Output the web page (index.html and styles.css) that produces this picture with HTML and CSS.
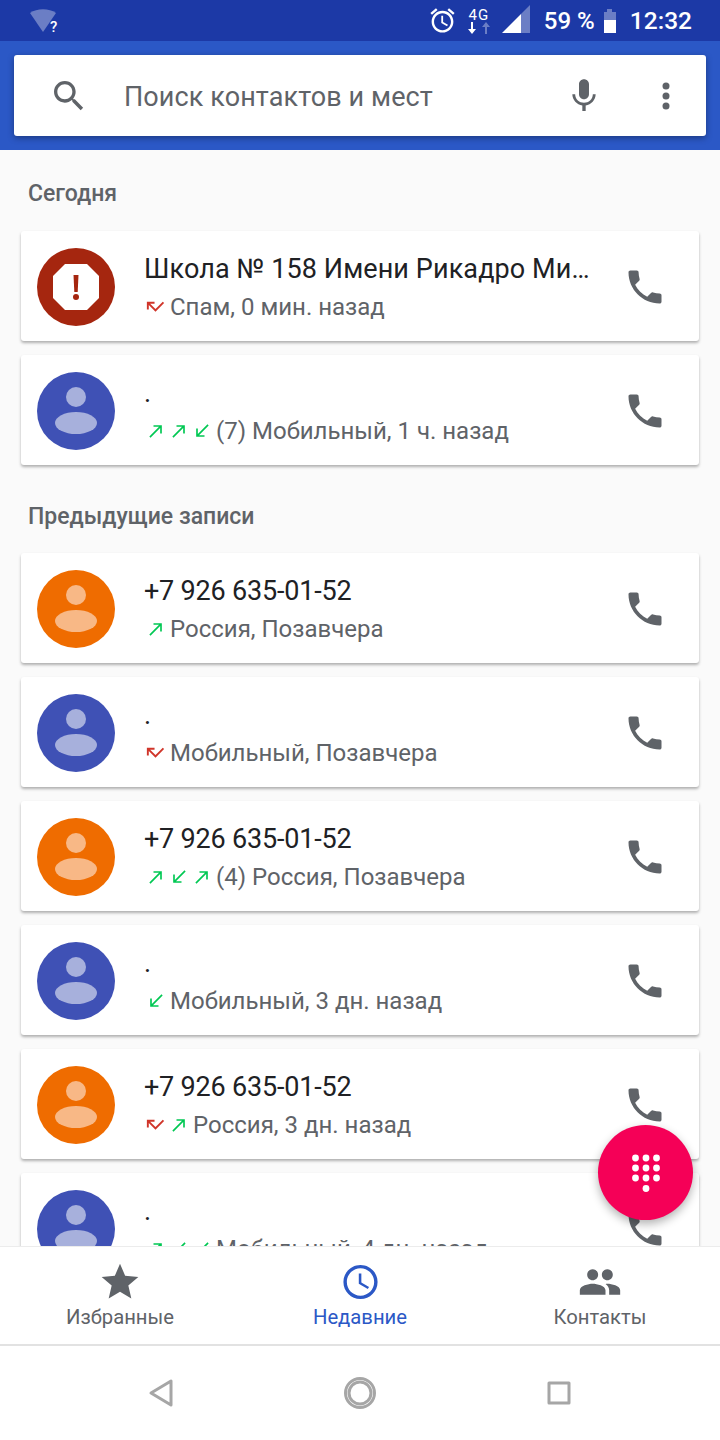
FILE: index.html
```html
<!DOCTYPE html>
<html>
<head>
  <title>Телефон</title>
  <link rel="stylesheet" href="styles.css">
</head>
<body>
  <svg class="defs" width="0" height="0">
    <symbol id="phone" viewBox="0 0 24 24"><path d="M6.62 10.79c1.44 2.83 3.76 5.14 6.59 6.59l2.2-2.2c.27-.27.67-.36 1.02-.24 1.12.37 2.33.57 3.57.57.55 0 1 .45 1 1V20c0 .55-.45 1-1 1-9.39 0-17-7.61-17-17 0-.55.45-1 1-1h3.5c.55 0 1 .45 1 1 0 1.25.2 2.45.57 3.57.11.35.03.74-.25 1.02l-2.2 2.2z"/></symbol>
    <symbol id="made" viewBox="0 0 24 24"><path d="M9 5v2h6.59L4 18.59 5.41 20 17 8.41V15h2V5z"/></symbol>
    <symbol id="received" viewBox="0 0 24 24"><path d="M20 5.41L18.59 4 7 15.59V9H5v10h10v-2H8.41z"/></symbol>
    <symbol id="missed" viewBox="0 0 24 24"><path d="M19.59 7L12 14.59 6.41 9H11V7H3v8h2v-4.59l7 7 9-9z"/></symbol>
    <symbol id="person" viewBox="0 0 78 78"><circle cx="39" cy="25" r="10"/><ellipse cx="39" cy="51" rx="21" ry="11"/></symbol>
  </svg>

  <div class="app">
    <div class="status-bar">
      <svg class="wifi" viewBox="0 0 36 26" width="36" height="26">
        <path class="dim" d="M0 5C7 0 19 0 26 5L13 24z"/>
        <text x="20" y="24">?</text>
      </svg>
      <div class="status-right">
        <svg class="alarm" viewBox="0 0 24 24" width="29" height="29"><path d="M22 5.72l-4.6-3.86-1.29 1.53 4.6 3.86L22 5.72zM7.88 3.39L6.6 1.86 2 5.71l1.29 1.53 4.59-3.85zM12.5 8H11v6l4.75 2.85.75-1.23-4-2.37V8zM12 4c-4.97 0-9 4.03-9 9s4.03 9 9 9 9-4.03 9-9-4.03-9-9-9zm0 16c-3.87 0-7-3.13-7-7s3.13-7 7-7 7 3.13 7 7-3.13 7-7 7z"/></svg>
        <div class="net">
          <span class="net-label">4G</span>
          <svg viewBox="0 0 26 12" width="26" height="12">
            <path d="M5 0h2v7h3l-4 5-4-5h3z"/>
            <path class="dim" d="M19 12h2V5h3l-4-5-4 5h3z"/>
          </svg>
        </div>
        <svg class="signal" viewBox="0 0 28 28" width="28" height="28">
          <path class="dim" d="M28 0v28H19V9z"/>
          <path d="M19 9v19H0z"/>
        </svg>
        <span class="battery-text">59 %</span>
        <div class="battery">
          <div class="battery-cap"></div>
          <div class="battery-empty"></div>
          <div class="battery-full"></div>
        </div>
        <span class="clock">12:32</span>
      </div>
    </div>

    <div class="header">
      <div class="search-box">
        <svg class="search-icon" viewBox="0 0 24 24" width="40" height="40"><path d="M15.5 14h-.79l-.28-.27C15.41 12.59 16 11.11 16 9.5 16 5.91 13.09 3 9.5 3S3 5.91 3 9.5 5.91 16 9.5 16c1.61 0 3.09-.59 4.23-1.57l.27.28v.79l5 4.99L20.49 19l-4.99-5zm-6 0C7.01 14 5 11.99 5 9.5S7.01 5 9.5 5 14 7.01 14 9.5 11.99 14 9.5 14z"/></svg>
        <span class="search-text">Поиск контактов и мест</span>
        <svg class="mic-icon" viewBox="0 0 24 24" width="40" height="40"><path d="M12 14c1.66 0 2.99-1.34 2.99-3L15 5c0-1.66-1.34-3-3-3S9 3.34 9 5v6c0 1.66 1.34 3 3 3zm5.3-3c0 3-2.54 5.1-5.3 5.1S6.7 14 6.7 11H5c0 3.41 2.72 6.23 6 6.72V21h2v-3.28c3.28-.48 6-3.3 6-6.72h-1.7z"/></svg>
        <svg class="more-icon" viewBox="0 0 24 24" width="40" height="40"><circle cx="12" cy="6" r="2.1"/><circle cx="12" cy="12" r="2.1"/><circle cx="12" cy="18" r="2.1"/></svg>
      </div>
    </div>

    <div class="list">
      <div class="section-title">Сегодня</div>

      <div class="card">
        <svg class="avatar spam" viewBox="0 0 78 78" width="78" height="78">
          <circle cx="39" cy="39" r="39"/>
          <path class="octagon" d="M28 16h22l12 12v22L50 62H28L16 50V28z"/>
          <path d="M36.500 27h5l-.8 17h-3.400z"/>
          <circle cx="39" cy="49" r="3"/>
        </svg>
        <div class="info">
          <div class="name">Школа № 158 Имени Рикадро Миллоса</div>
          <div class="sub">
            <svg class="arrow red"><use href="#missed"/></svg>
            <span>Спам, 0 мин. назад</span>
          </div>
        </div>
        <svg class="phone"><use href="#phone"/></svg>
      </div>

      <div class="card">
        <svg class="avatar blue" viewBox="0 0 78 78" width="78" height="78">
          <circle cx="39" cy="39" r="39"/>
          <use class="face" href="#person"/>
        </svg>
        <div class="info">
          <div class="name">.</div>
          <div class="sub">
            <svg class="arrow green"><use href="#made"/></svg>
            <svg class="arrow green"><use href="#made"/></svg>
            <svg class="arrow green"><use href="#received"/></svg>
            <span>(7) Мобильный, 1 ч. назад</span>
          </div>
        </div>
        <svg class="phone"><use href="#phone"/></svg>
      </div>

      <div class="section-title second">Предыдущие записи</div>

      <div class="card">
        <svg class="avatar orange" viewBox="0 0 78 78" width="78" height="78">
          <circle cx="39" cy="39" r="39"/>
          <use class="face" href="#person"/>
        </svg>
        <div class="info">
          <div class="name number">+7 926 635-01-52</div>
          <div class="sub">
            <svg class="arrow green"><use href="#made"/></svg>
            <span>Россия, Позавчера</span>
          </div>
        </div>
        <svg class="phone"><use href="#phone"/></svg>
      </div>

      <div class="card">
        <svg class="avatar blue" viewBox="0 0 78 78" width="78" height="78">
          <circle cx="39" cy="39" r="39"/>
          <use class="face" href="#person"/>
        </svg>
        <div class="info">
          <div class="name">.</div>
          <div class="sub">
            <svg class="arrow red"><use href="#missed"/></svg>
            <span>Мобильный, Позавчера</span>
          </div>
        </div>
        <svg class="phone"><use href="#phone"/></svg>
      </div>

      <div class="card">
        <svg class="avatar orange" viewBox="0 0 78 78" width="78" height="78">
          <circle cx="39" cy="39" r="39"/>
          <use class="face" href="#person"/>
        </svg>
        <div class="info">
          <div class="name number">+7 926 635-01-52</div>
          <div class="sub">
            <svg class="arrow green"><use href="#made"/></svg>
            <svg class="arrow green"><use href="#received"/></svg>
            <svg class="arrow green"><use href="#made"/></svg>
            <span>(4) Россия, Позавчера</span>
          </div>
        </div>
        <svg class="phone"><use href="#phone"/></svg>
      </div>

      <div class="card">
        <svg class="avatar blue" viewBox="0 0 78 78" width="78" height="78">
          <circle cx="39" cy="39" r="39"/>
          <use class="face" href="#person"/>
        </svg>
        <div class="info">
          <div class="name">.</div>
          <div class="sub">
            <svg class="arrow green"><use href="#received"/></svg>
            <span>Мобильный, 3 дн. назад</span>
          </div>
        </div>
        <svg class="phone"><use href="#phone"/></svg>
      </div>

      <div class="card">
        <svg class="avatar orange" viewBox="0 0 78 78" width="78" height="78">
          <circle cx="39" cy="39" r="39"/>
          <use class="face" href="#person"/>
        </svg>
        <div class="info">
          <div class="name number">+7 926 635-01-52</div>
          <div class="sub">
            <svg class="arrow red"><use href="#missed"/></svg>
            <svg class="arrow green"><use href="#made"/></svg>
            <span>Россия, 3 дн. назад</span>
          </div>
        </div>
        <svg class="phone"><use href="#phone"/></svg>
      </div>

      <div class="card">
        <svg class="avatar blue" viewBox="0 0 78 78" width="78" height="78">
          <circle cx="39" cy="39" r="39"/>
          <use class="face" href="#person"/>
        </svg>
        <div class="info">
          <div class="name">.</div>
          <div class="sub">
            <svg class="arrow green"><use href="#made"/></svg>
            <svg class="arrow green"><use href="#received"/></svg>
            <svg class="arrow green"><use href="#received"/></svg>
            <span>Мобильный, 4 дн. назад</span>
          </div>
        </div>
        <svg class="phone"><use href="#phone"/></svg>
      </div>
    </div>

    <div class="fab">
      <svg viewBox="0 0 34 42" width="34" height="42">
        <circle cx="6.500" cy="5" r="3.400"/><circle cx="17" cy="5" r="3.400"/><circle cx="27.500" cy="5" r="3.400"/>
        <circle cx="6.500" cy="15" r="3.400"/><circle cx="17" cy="15" r="3.400"/><circle cx="27.500" cy="15" r="3.400"/>
        <circle cx="6.500" cy="25" r="3.400"/><circle cx="17" cy="25" r="3.400"/><circle cx="27.500" cy="25" r="3.400"/>
        <circle cx="17" cy="35.500" r="3.400"/>
      </svg>
    </div>

    <div class="tabs">
      <div class="tab">
        <svg viewBox="0 0 24 24" width="44" height="44"><path d="M12 17.27L18.18 21l-1.64-7.03L22 9.24l-7.19-.61L12 2 9.19 8.63 2 9.24l5.46 4.73L5.82 21z"/></svg>
        <span>Избранные</span>
      </div>
      <div class="tab active">
        <svg viewBox="0 0 24 24" width="41" height="44"><path d="M11.99 2C6.47 2 2 6.48 2 12s4.470 10 9.990 10C17.520 22 22 17.520 22 12S17.520 2 11.990 2zM12 20c-4.420 0-8-3.580-8-8s3.580-8 8-8 8 3.580 8 8-3.580 8-8 8zm.5-13H11v6l5.250 3.150.75-1.230-4.500-2.670z"/></svg>
        <span>Недавние</span>
      </div>
      <div class="tab">
        <svg viewBox="0 0 24 24" width="44" height="44"><path d="M16 11c1.660 0 2.990-1.340 2.990-3S17.660 5 16 5s-3 1.340-3 3 1.340 3 3 3zm-8 0c1.660 0 2.990-1.340 2.990-3S9.660 5 8 5 5 6.340 5 8s1.340 3 3 3zm0 2c-2.330 0-7 1.170-7 3.500V19h14v-2.500c0-2.330-4.670-3.500-7-3.500zm8 0c-.29 0-.62.02-.97.05 1.160.84 1.970 1.970 1.970 3.450V19h6v-2.500c0-2.330-4.670-3.500-7-3.500z"/></svg>
        <span>Контакты</span>
      </div>
    </div>

    <div class="system-nav">
      <svg viewBox="0 0 26 30" width="26" height="30"><path d="M23 3v24L3 15z"/></svg>
      <svg viewBox="0 0 32 32" width="32" height="32"><circle cx="16" cy="16" r="14.500"/><circle class="inner" cx="16" cy="16" r="11"/></svg>
      <svg viewBox="0 0 26 26" width="26" height="26"><path d="M3 3h20v20H3z"/></svg>
    </div>
  </div>
</body>
</html>
```

FILE: styles.css
```css
* {
  box-sizing: border-box;
}
body {
  margin: 0;
  font-family: Roboto, "Noto Sans", sans-serif;
  background-color: #fafafa;
}
.defs {
  position: absolute;
}
.app {
  position: relative;
  width: 720px;
  height: 1440px;
  display: flex;
  flex-direction: column;
  overflow: hidden;
}

/* status bar */
.status-bar {
  height: 41px;
  flex-shrink: 0;
  background-color: #1c39a6;
  color: white;
  display: flex;
  justify-content: space-between;
  align-items: center;
  padding: 0 28px 0 30px;
}
.status-bar svg {
  fill: white;
  display: block;
}
.status-bar .dim {
  fill: rgba(255,255,255,0.35);
}
.wifi {
  margin-top: 1px;
}
.wifi text {
  font-size: 15px;
  font-weight: 500;
  fill: white;
}
.status-right {
  display: flex;
  align-items: center;
}
.net {
  width: 26px;
  margin-left: 9px;
  display: flex;
  flex-direction: column;
  align-items: center;
}
.net-label {
  font-size: 15px;
  line-height: 14px;
  letter-spacing: 1px;
}
.signal {
  margin-left: 10px;
  margin-bottom: 4px;
}
.battery-text {
  margin-left: 14px;
  font-size: 24px;
  font-weight: 500;
  width: 50px;
  white-space: nowrap;
}
.battery {
  margin-left: 10px;
  width: 12px;
  display: flex;
  flex-direction: column;
  align-items: center;
}
.battery-cap {
  width: 5px;
  height: 3px;
  background-color: rgba(255,255,255,0.35);
}
.battery-empty {
  width: 12px;
  height: 8px;
  background-color: rgba(255,255,255,0.35);
}
.battery-full {
  width: 12px;
  height: 13px;
  background-color: white;
}
.clock {
  margin-left: 14px;
  font-size: 24.500px;
  font-weight: 500;
}

/* search */
.header {
  height: 109px;
  flex-shrink: 0;
  background-color: #2b58c6;
  padding: 14px 14px 0;
}
.search-box {
  height: 81px;
  background-color: white;
  border-radius: 3px;
  box-shadow: 0 2px 6px rgba(0,0,0,0.35);
  display: flex;
  align-items: center;
  padding-left: 35px;
}
.search-box svg {
  fill: #5f6368;
  flex-shrink: 0;
}
.search-text {
  margin-left: 35px;
  margin-top: 2px;
  width: 440px;
  font-size: 27px;
  letter-spacing: 0.1px;
  color: #5f6368;
}
.more-icon {
  margin-left: 42px;
}

/* call list */
.list {
  flex: 1;
  overflow: hidden;
  padding: 0 21px;
}
.section-title {
  height: 81px;
  padding: 30px 0 0 7px;
  font-size: 23px;
  line-height: 28px;
  font-weight: 500;
  color: #5f6368;
}
.section-title.second {
  height: 74px;
  padding-top: 24px;
}
.card {
  height: 110px;
  margin-bottom: 14px;
  background-color: white;
  border-radius: 3px;
  box-shadow: 0 2px 3px rgba(0,0,0,0.3);
  display: flex;
  align-items: center;
  padding-left: 16px;
}
.avatar {
  flex-shrink: 0;
  margin-top: 2px;
}
.avatar.blue {
  fill: #3f51b5;
}
.avatar.blue .face {
  fill: #a7b0dc;
}
.avatar.orange {
  fill: #ef6c00;
}
.avatar.orange .face {
  fill: #f8b886;
}
.avatar.spam {
  fill: #a5260f;
}
.avatar.spam .octagon {
  fill: white;
}
.info {
  margin-left: 29px;
  margin-top: 1px;
  width: 448px;
}
.name {
  font-size: 27px;
  letter-spacing: 0.1px;
  line-height: 36px;
  color: #202124;
  white-space: nowrap;
  overflow: hidden;
  text-overflow: ellipsis;
}
.name.number {
  letter-spacing: -0.2px;
}
.sub {
  display: flex;
  align-items: center;
  margin-top: 4px;
  font-size: 24px;
  line-height: 32px;
  color: #5f6368;
  white-space: nowrap;
}
.sub span {
  margin-left: 3px;
}
.arrow {
  width: 20px;
  height: 20px;
  margin: 0 1.500px;
  flex-shrink: 0;
}
.arrow.green {
  fill: #00c853;
}
.arrow.red {
  width: 23px;
  height: 23px;
  margin: 0;
  fill: #d0352a;
}
.phone {
  width: 44px;
  height: 44px;
  margin-left: 31px;
  margin-top: 2px;
  flex-shrink: 0;
  fill: #5f6368;
}

/* dial button */
.fab {
  position: absolute;
  left: 598px;
  top: 1125px;
  width: 95px;
  height: 95px;
  border-radius: 50%;
  background-color: #f50057;
  box-shadow: 0 4px 10px rgba(0,0,0,0.3);
  display: flex;
  justify-content: center;
  align-items: center;
  z-index: 2;
}
.fab svg {
  fill: white;
  margin-top: 2px;
}

/* bottom tabs */
.tabs {
  height: 97px;
  flex-shrink: 0;
  background-color: white;
  display: flex;
  position: relative;
  box-shadow: 0 -1px 0 #ececec;
}
.tab {
  width: 240px;
  padding-top: 13px;
  display: flex;
  flex-direction: column;
  align-items: center;
  font-size: 20.250px;
  line-height: 26px;
  color: #5f6368;
}
.tab svg {
  fill: #5f6368;
}
.tab span {
  margin-top: 0;
}
.tab.active {
  color: #2b58c6;
}
.tab.active svg {
  fill: #2b58c6;
}

/* android nav */
.system-nav {
  height: 96px;
  flex-shrink: 0;
  background-color: white;
  border-top: 2px solid #e2e2e2;
  display: flex;
  justify-content: center;
  align-items: center;
  gap: 170px;
}
.system-nav svg {
  fill: none;
  stroke: #a6a6a6;
  stroke-width: 3;
  stroke-linejoin: round;
}
```
